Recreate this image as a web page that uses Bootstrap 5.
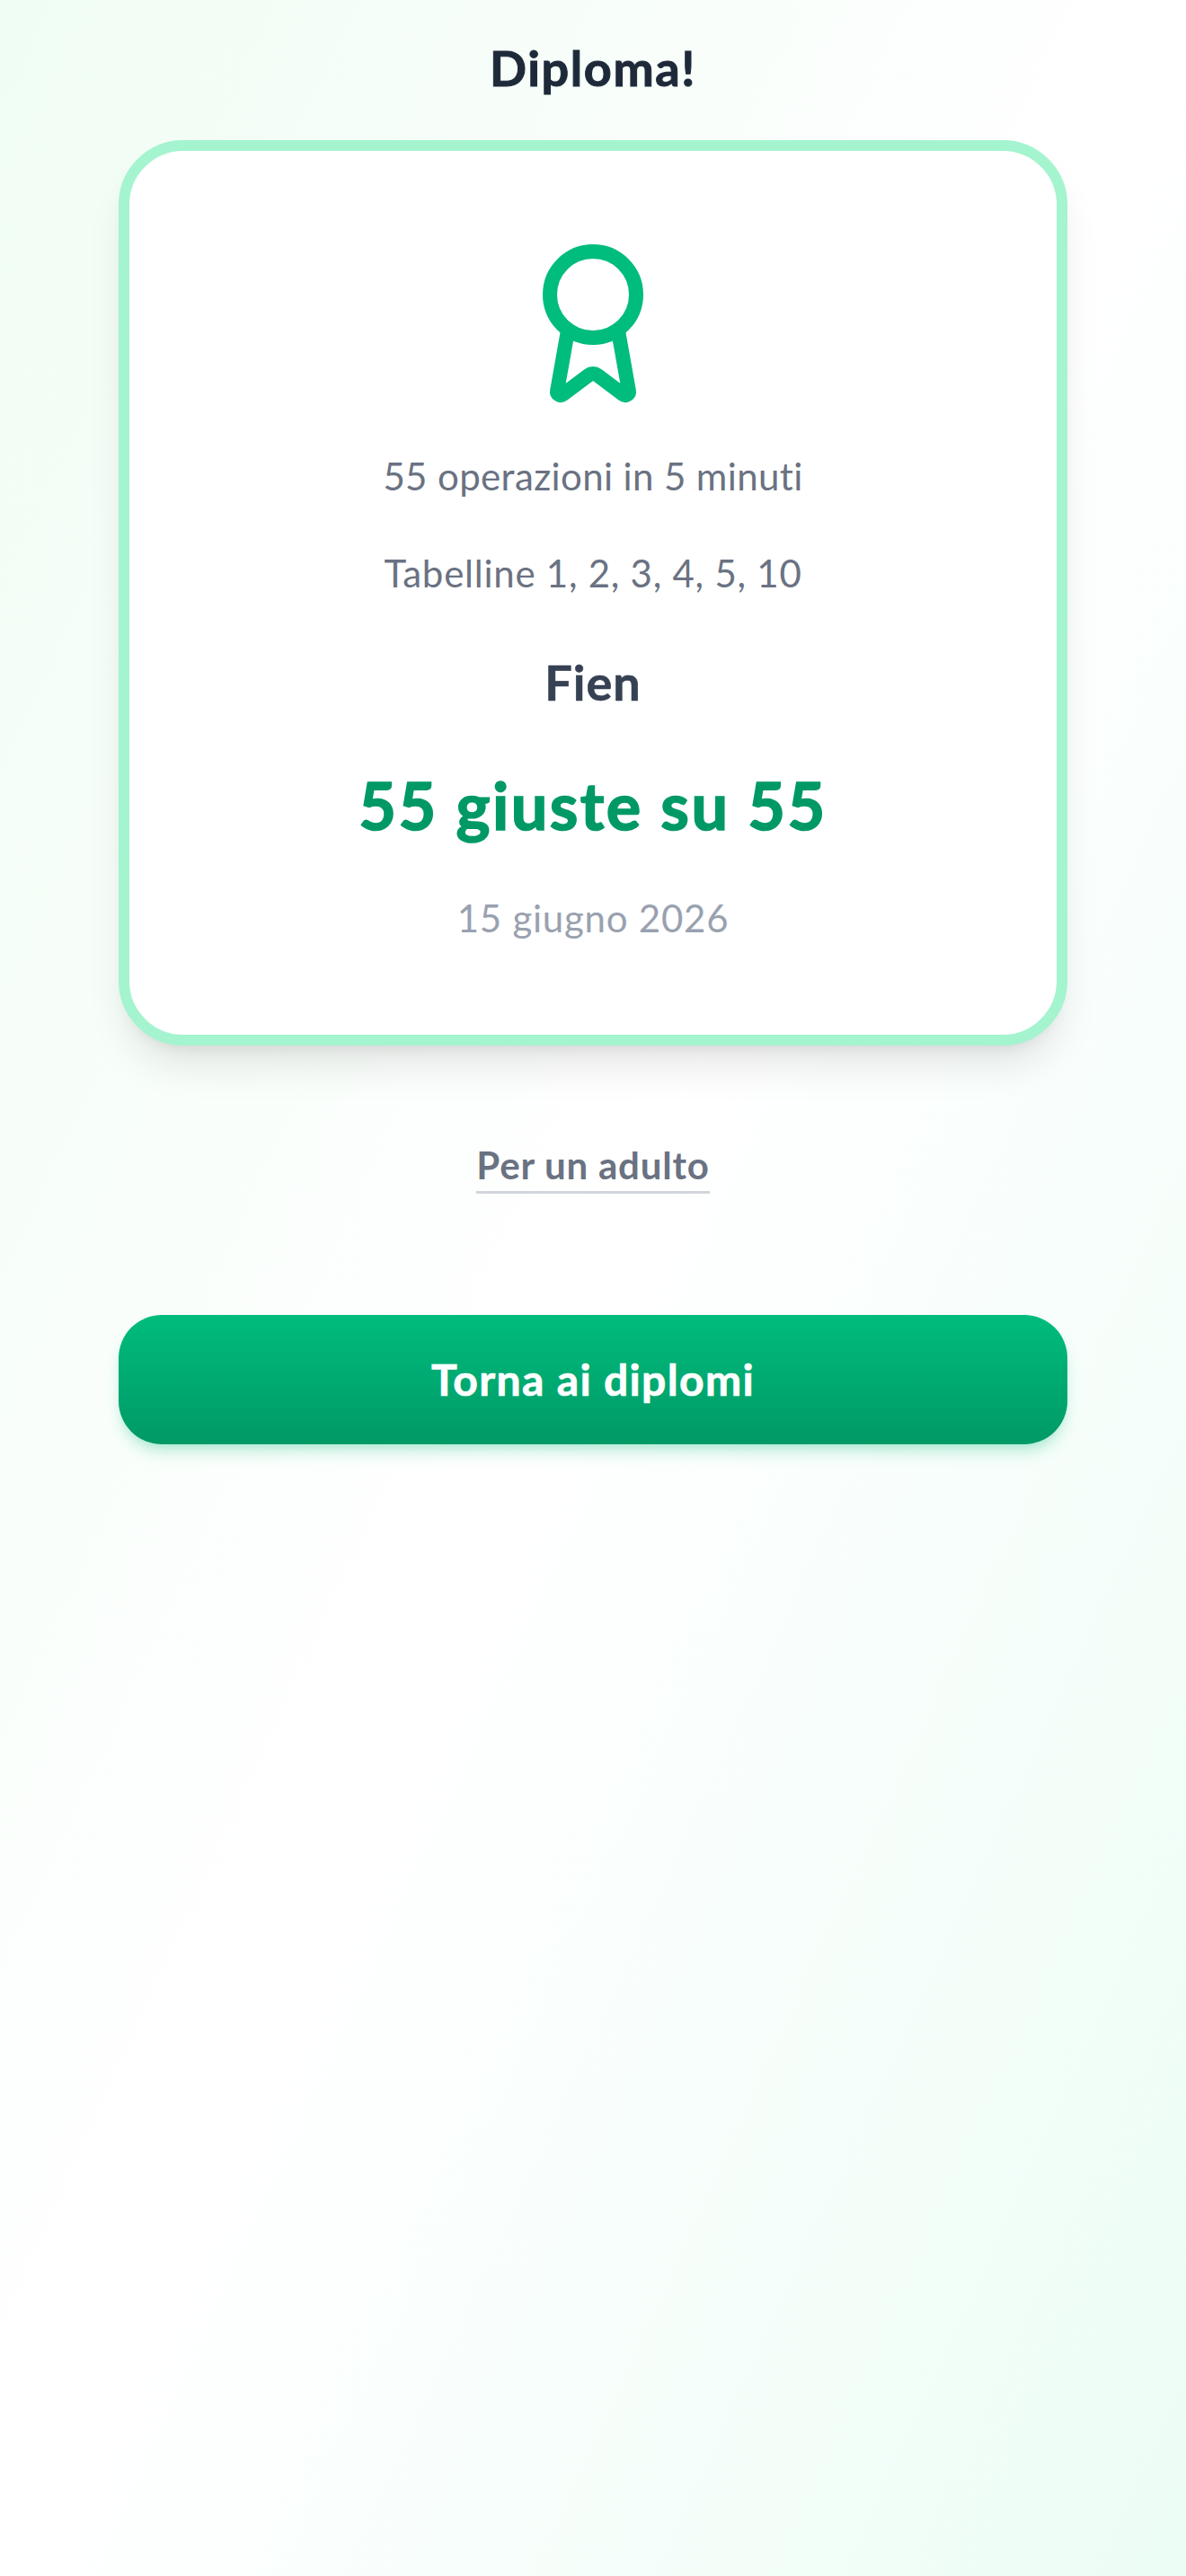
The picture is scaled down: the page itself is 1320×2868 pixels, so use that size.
<!DOCTYPE html>
<html lang="it">
<head>
<meta charset="utf-8">
<title>Diploma!</title>
<link rel="stylesheet" href="https://cdn.jsdelivr.net/npm/bootstrap@5.3.0/dist/css/bootstrap.min.css">
<style>
  html, body { height: 100%; }
  body {
    font-family: "Lato", "Noto Sans", sans-serif;
    font-variant-ligatures: none;
    min-height: 2868px;
    background: linear-gradient(to bottom right, #f0fdf4, #ffffff, #ecfdf5);
  }
  .page-wrap { padding: 36px 132px 0; }
  .page-title { font-size: 54px; line-height: 79px; padding-bottom: 5px; letter-spacing: 1.6px; font-weight: 700; -webkit-text-stroke: 1px #1e2939; color: #1e2939; margin: 0 0 36px; }
  .diploma-card {
    border: 12px solid #a4f4cf;
    border-radius: 72px;
    padding: 96px 72px;
    gap: 48px;
    box-shadow: 0 30px 45px -9px rgba(0,0,0,.1), 0 12px 18px -12px rgba(0,0,0,.1);
  }
  .medal { width: 192px; height: 192px; display: block; color: #00bc7d; }
  .detail-line { font-size: 42px; line-height: 52px; padding-bottom: 8px; letter-spacing: .37px; color: #6a7282; }
  .detail-wide { letter-spacing: .75px; }
  .pupil-name { font-size: 54px; line-height: 79px; padding-bottom: 5px; letter-spacing: 1px; font-weight: 700; -webkit-text-stroke: .6px #364153; color: #364153; }
  .score-line { font-size: 72px; line-height: 88px; padding-bottom: 8px; letter-spacing: 2.4px; font-weight: 700; -webkit-text-stroke: 1.6px #009966; color: #009966; }
  .date-line { font-size: 42px; line-height: 52px; padding-bottom: 8px; letter-spacing: .75px; color: #99a1af; }
  .adult-row { margin-top: 106px; margin-bottom: 135px; }
  .adult-link {
    font-size: 42px; line-height: 54px; padding-bottom: 2px; letter-spacing: .8px; font-weight: 700; color: #6a7282;
    text-decoration: none; border-bottom: 3px solid #d1d5dc;
  }
  .back-btn {
    height: 144px;
    padding-bottom: 7px;
    border: 0;
    border-radius: 48px;
    font-size: 48px;
    letter-spacing: 1.35px;
    font-weight: 700;
    -webkit-text-stroke: .7px #fff;
    color: #fff;
    background: linear-gradient(to bottom, #00bc7d, #009966);
    box-shadow: 0 12px 18px -3px rgba(0,188,125,.22), 0 6px 12px -6px rgba(0,188,125,.22);
  }
  .back-btn:hover { color: #fff; }
</style>
</head>
<body>
<main class="page-wrap">
  <h1 class="page-title text-center">Diploma!</h1>
  <section class="diploma-card card bg-white d-flex flex-column align-items-center text-center">
    <svg class="medal" viewBox="0 0 24 24" fill="none" stroke="currentColor" stroke-width="2" stroke-linecap="round" stroke-linejoin="round" aria-hidden="true">
      <path d="m15.477 12.89 1.515 8.526a.5.5 0 0 1-.81.47l-3.58-2.687a1 1 0 0 0-1.197 0l-3.586 2.686a.5.5 0 0 1-.81-.469l1.514-8.526"/>
      <circle cx="12" cy="8" r="6"/>
    </svg>
    <div class="detail-line">55 operazioni in 5 minuti</div>
    <div class="detail-line detail-wide">Tabelline 1, 2, 3, 4, 5, 10</div>
    <div class="pupil-name">Fien</div>
    <div class="score-line">55 giuste su 55</div>
    <div class="date-line">15 giugno 2026</div>
  </section>
  <div class="adult-row d-flex justify-content-center"><a class="adult-link" href="#">Per un adulto</a></div>
  <a class="back-btn btn w-100 d-flex align-items-center justify-content-center" href="#">Torna ai diplomi</a>
</main>
<script src="https://cdn.jsdelivr.net/npm/bootstrap@5.3.0/dist/js/bootstrap.bundle.min.js"></script>
</body>
</html>
